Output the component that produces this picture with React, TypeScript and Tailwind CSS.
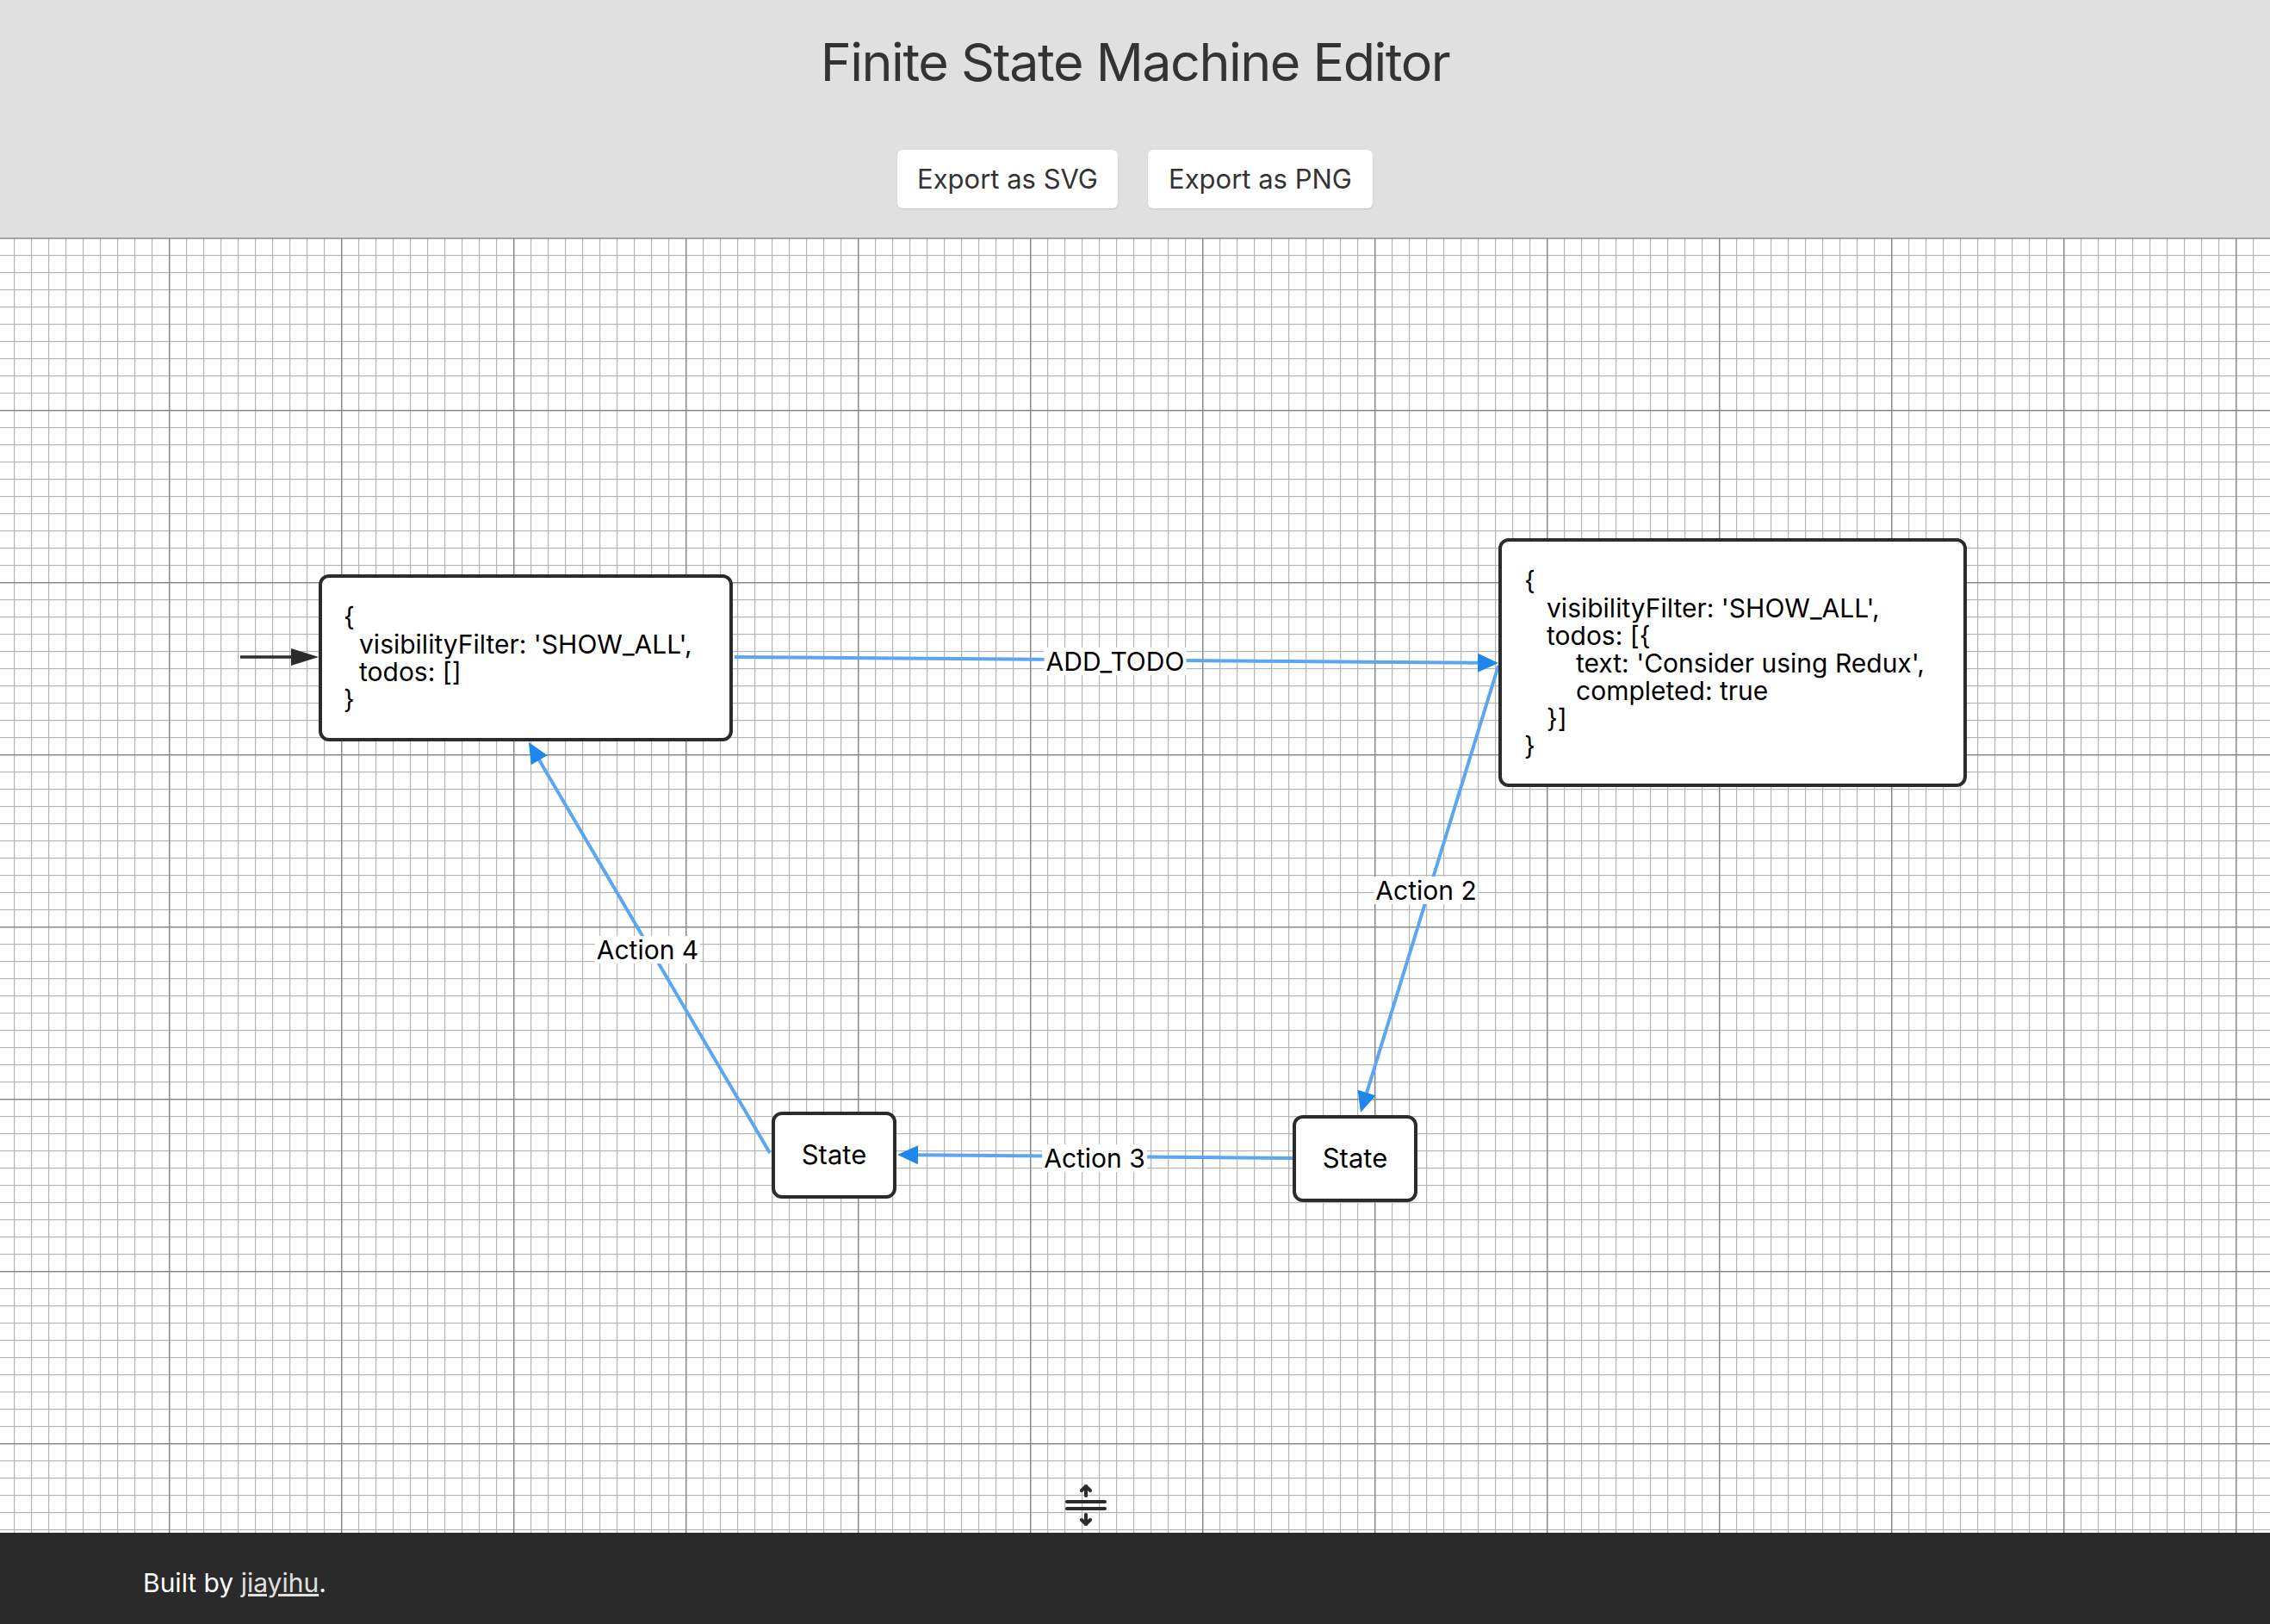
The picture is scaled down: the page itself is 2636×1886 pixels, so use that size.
import React from "react";

type P = [number, number];

function Arrow({ from, to, color, line, width = 3.5, len = 24, half = 11 }: { from: P; to: P; color: string; line: string; width?: number; len?: number; half?: number }) {
  const dx = to[0] - from[0];
  const dy = to[1] - from[1];
  const d = Math.hypot(dx, dy);
  const ux = dx / d;
  const uy = dy / d;
  const bx = to[0] - ux * len;
  const by = to[1] - uy * len;
  const px = -uy;
  const py = ux;
  const pts = `${to[0]},${to[1]} ${bx + px * half},${by + py * half} ${bx - px * half},${by - py * half}`;
  return (
    <g>
      <line x1={from[0]} y1={from[1]} x2={bx + ux * 2} y2={by + uy * 2} stroke={line} strokeWidth={width} />
      <polygon points={pts} fill={color} />
    </g>
  );
}

export default function App() {
  const blueLine = "#5ba6f3";
  const blueHead = "#1f86ea";
  return (
    <div className="w-[2636px] h-[1886px] flex flex-col font-['Inter',sans-serif] overflow-hidden">
      <header className="h-[276px] shrink-0 bg-[#e0e0e0] flex flex-col items-center">
        <h1 className="mt-[42px] text-[61px] tracking-[-1.5px] leading-none text-[#333333] font-normal">Finite State Machine Editor</h1>
        <div className="mt-[71px] flex gap-[35px]">
          <button className="h-[68px] w-[256px] bg-white rounded-[6px] text-[31px] text-[#333333] shadow-[0_1px_2px_rgba(0,0,0,0.12)]">Export as SVG</button>
          <button className="h-[68px] w-[261px] bg-white rounded-[6px] text-[31px] text-[#333333] shadow-[0_1px_2px_rgba(0,0,0,0.12)]">Export as PNG</button>
        </div>
      </header>

      <main className="relative h-[1504px] shrink-0 bg-white overflow-hidden">
        <svg className="absolute inset-0" width="2636" height="1504">
          <defs>
            <pattern id="minor" x="16" y="0" width="20" height="20" patternUnits="userSpaceOnUse">
              <rect x="0" y="0" width="1.2" height="20" fill="#b5b5b5" />
              <rect x="0" y="0" width="20" height="1.2" fill="#b5b5b5" />
            </pattern>
            <pattern id="major" x="196" y="0" width="200" height="200" patternUnits="userSpaceOnUse">
              <rect x="0" y="0" width="1.4" height="200" fill="#878787" />
              <rect x="0" y="0" width="200" height="1.4" fill="#878787" />
            </pattern>
          </defs>
          <rect width="2636" height="1504" fill="url(#minor)" />
          <rect width="2636" height="1504" fill="url(#major)" />
        </svg>

        <svg className="absolute inset-0" width="2636" height="1504">
          <Arrow from={[279, 487]} to={[370, 487]} color="#2b2b2b" line="#2b2b2b" width={3.5} len={32} half={10} />
          <Arrow from={[853, 487]} to={[1740, 494]} color={blueHead} line={blueLine} width={4} />
          <Arrow from={[1740, 497]} to={[1580, 1016]} color={blueHead} line={blueLine} width={4} />
          <Arrow from={[1501, 1069]} to={[1042, 1065]} color={blueHead} line={blueLine} width={4} />
          <Arrow from={[894, 1063]} to={[614, 586]} color={blueHead} line={blueLine} width={4} />
        </svg>

        <div className="absolute left-[370px] top-[391px] w-[481px] h-[194px] bg-white border-[4px] border-[#2b2b2b] rounded-[12px] flex flex-col justify-center pl-[25px] text-[30px] leading-[32px] text-black">
          <div>{"{"}</div>
          <div className="pl-[18px]">visibilityFilter: 'SHOW_ALL',</div>
          <div className="pl-[18px]">todos: []</div>
          <div>{"}"}</div>
        </div>

        <div className="absolute left-[1740px] top-[349px] w-[544px] h-[289px] bg-white border-[4px] border-[#2b2b2b] rounded-[12px] flex flex-col justify-center pl-[26px] text-[30px] leading-[32px] text-black">
          <div>{"{"}</div>
          <div className="pl-[26px]">visibilityFilter: 'SHOW_ALL',</div>
          <div className="pl-[26px]">todos: [{"{"}</div>
          <div className="pl-[60px]">text: 'Consider using Redux',</div>
          <div className="pl-[60px]">completed: true</div>
          <div className="pl-[26px]">{"}]"}</div>
          <div>{"}"}</div>
        </div>

        <div className="absolute left-[896px] top-[1015px] w-[145px] h-[101px] bg-white border-[4px] border-[#2b2b2b] rounded-[12px] flex items-center justify-center text-[31px] text-black">State</div>
        <div className="absolute left-[1501px] top-[1019px] w-[145px] h-[101px] bg-white border-[4px] border-[#2b2b2b] rounded-[12px] flex items-center justify-center text-[31px] text-black">State</div>

        <div className="absolute left-[1295px] top-[492px] -translate-x-1/2 -translate-y-1/2 bg-white px-[2px] text-[30px] leading-[32px] text-black">ADD_TODO</div>
        <div className="absolute left-[1656px] top-[758px] -translate-x-1/2 -translate-y-1/2 bg-white px-[2px] text-[30px] leading-[32px] text-black">Action 2</div>
        <div className="absolute left-[1271px] top-[1069px] -translate-x-1/2 -translate-y-1/2 bg-white px-[2px] text-[30px] leading-[32px] text-black">Action 3</div>
        <div className="absolute left-[752px] top-[827px] -translate-x-1/2 -translate-y-1/2 bg-white px-[2px] text-[30px] leading-[32px] text-black">Action 4</div>

        <svg className="absolute left-[1236px] top-[1446px]" width="50" height="50" viewBox="0 0 50 50">
          <g stroke="#2b2b2b" strokeWidth="4" strokeLinecap="round" strokeLinejoin="round" fill="none">
            <line x1="3" y1="22" x2="47" y2="22" />
            <line x1="3" y1="30" x2="47" y2="30" />
            <line x1="25" y1="4" x2="25" y2="15" />
            <polyline points="20,9 25,4 30,9" />
            <line x1="25" y1="37" x2="25" y2="48" />
            <polyline points="20,43 25,48 30,43" />
          </g>
        </svg>
      </main>

      <footer className="h-[106px] shrink-0 bg-[#2a2a2a] flex items-center pl-[166px] pt-[10px] text-[30px] text-white">
        <span>
          Built by <a className="underline text-[#e0e0e0]">jiayihu</a>.
        </span>
      </footer>
    </div>
  );
}
